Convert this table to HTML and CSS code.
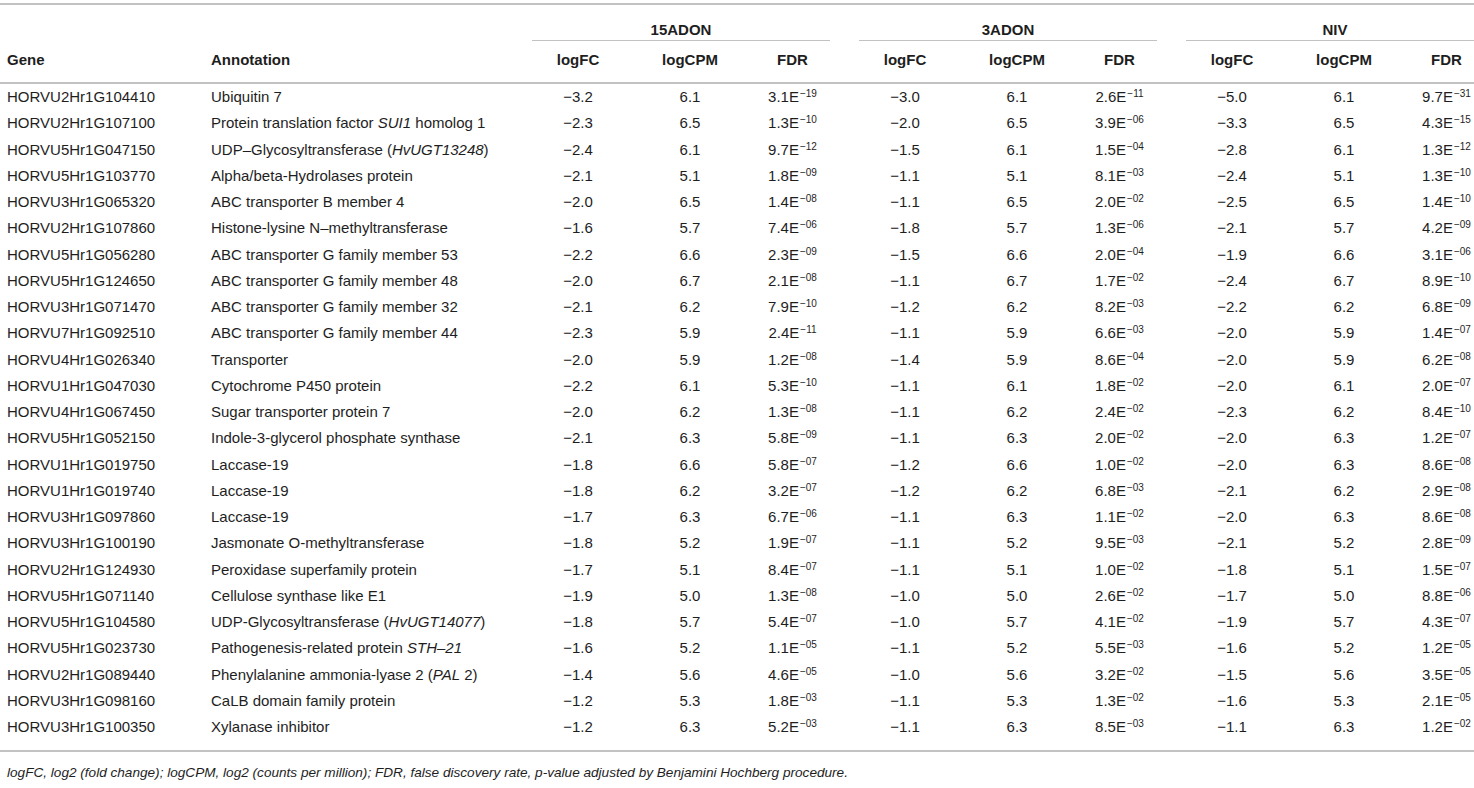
FILE: index.html
```html
<!DOCTYPE html>
<html lang="en">
<head>
<meta charset="utf-8">
<title>Differentially expressed genes</title>
<link rel="stylesheet" href="styles.css">
</head>
<body>
<div class="wrap">
<table class="data">
<colgroup>
<col class="c-gene"><col class="c-ann">
<col class="c1"><col class="c2"><col class="c3">
<col class="c1"><col class="c2"><col class="c3">
<col class="c1"><col class="c2"><col class="c3">
</colgroup>
<thead>
<tr class="grp">
<th rowspan="2" class="left gene-h">Gene</th>
<th rowspan="2" class="left ann-h">Annotation</th>
<th colspan="3"><div class="gline">15ADON</div></th>
<th colspan="3"><div class="gline">3ADON</div></th>
<th colspan="3"><div class="gline">NIV</div></th>
</tr>
<tr class="sub">
<th>logFC</th><th>logCPM</th><th>FDR</th>
<th>logFC</th><th>logCPM</th><th>FDR</th>
<th>logFC</th><th>logCPM</th><th>FDR</th>
</tr>
</thead>
<tbody>
<tr><td class="gene">HORVU2Hr1G104410</td><td class="ann">Ubiquitin 7</td><td>−3.2</td><td>6.1</td><td>3.1E<sup>−19</sup></td><td>−3.0</td><td>6.1</td><td>2.6E<sup>−11</sup></td><td>−5.0</td><td>6.1</td><td>9.7E<sup>−31</sup></td></tr>
<tr><td class="gene">HORVU2Hr1G107100</td><td class="ann">Protein translation factor <i>SUI1</i> homolog 1</td><td>−2.3</td><td>6.5</td><td>1.3E<sup>−10</sup></td><td>−2.0</td><td>6.5</td><td>3.9E<sup>−06</sup></td><td>−3.3</td><td>6.5</td><td>4.3E<sup>−15</sup></td></tr>
<tr><td class="gene">HORVU5Hr1G047150</td><td class="ann">UDP–Glycosyltransferase (<i>HvUGT13248</i>)</td><td>−2.4</td><td>6.1</td><td>9.7E<sup>−12</sup></td><td>−1.5</td><td>6.1</td><td>1.5E<sup>−04</sup></td><td>−2.8</td><td>6.1</td><td>1.3E<sup>−12</sup></td></tr>
<tr><td class="gene">HORVU5Hr1G103770</td><td class="ann">Alpha/beta-Hydrolases protein</td><td>−2.1</td><td>5.1</td><td>1.8E<sup>−09</sup></td><td>−1.1</td><td>5.1</td><td>8.1E<sup>−03</sup></td><td>−2.4</td><td>5.1</td><td>1.3E<sup>−10</sup></td></tr>
<tr><td class="gene">HORVU3Hr1G065320</td><td class="ann">ABC transporter B member 4</td><td>−2.0</td><td>6.5</td><td>1.4E<sup>−08</sup></td><td>−1.1</td><td>6.5</td><td>2.0E<sup>−02</sup></td><td>−2.5</td><td>6.5</td><td>1.4E<sup>−10</sup></td></tr>
<tr><td class="gene">HORVU2Hr1G107860</td><td class="ann">Histone-lysine N–methyltransferase</td><td>−1.6</td><td>5.7</td><td>7.4E<sup>−06</sup></td><td>−1.8</td><td>5.7</td><td>1.3E<sup>−06</sup></td><td>−2.1</td><td>5.7</td><td>4.2E<sup>−09</sup></td></tr>
<tr><td class="gene">HORVU5Hr1G056280</td><td class="ann">ABC transporter G family member 53</td><td>−2.2</td><td>6.6</td><td>2.3E<sup>−09</sup></td><td>−1.5</td><td>6.6</td><td>2.0E<sup>−04</sup></td><td>−1.9</td><td>6.6</td><td>3.1E<sup>−06</sup></td></tr>
<tr><td class="gene">HORVU5Hr1G124650</td><td class="ann">ABC transporter G family member 48</td><td>−2.0</td><td>6.7</td><td>2.1E<sup>−08</sup></td><td>−1.1</td><td>6.7</td><td>1.7E<sup>−02</sup></td><td>−2.4</td><td>6.7</td><td>8.9E<sup>−10</sup></td></tr>
<tr><td class="gene">HORVU3Hr1G071470</td><td class="ann">ABC transporter G family member 32</td><td>−2.1</td><td>6.2</td><td>7.9E<sup>−10</sup></td><td>−1.2</td><td>6.2</td><td>8.2E<sup>−03</sup></td><td>−2.2</td><td>6.2</td><td>6.8E<sup>−09</sup></td></tr>
<tr><td class="gene">HORVU7Hr1G092510</td><td class="ann">ABC transporter G family member 44</td><td>−2.3</td><td>5.9</td><td>2.4E<sup>−11</sup></td><td>−1.1</td><td>5.9</td><td>6.6E<sup>−03</sup></td><td>−2.0</td><td>5.9</td><td>1.4E<sup>−07</sup></td></tr>
<tr><td class="gene">HORVU4Hr1G026340</td><td class="ann">Transporter</td><td>−2.0</td><td>5.9</td><td>1.2E<sup>−08</sup></td><td>−1.4</td><td>5.9</td><td>8.6E<sup>−04</sup></td><td>−2.0</td><td>5.9</td><td>6.2E<sup>−08</sup></td></tr>
<tr><td class="gene">HORVU1Hr1G047030</td><td class="ann">Cytochrome P450 protein</td><td>−2.2</td><td>6.1</td><td>5.3E<sup>−10</sup></td><td>−1.1</td><td>6.1</td><td>1.8E<sup>−02</sup></td><td>−2.0</td><td>6.1</td><td>2.0E<sup>−07</sup></td></tr>
<tr><td class="gene">HORVU4Hr1G067450</td><td class="ann">Sugar transporter protein 7</td><td>−2.0</td><td>6.2</td><td>1.3E<sup>−08</sup></td><td>−1.1</td><td>6.2</td><td>2.4E<sup>−02</sup></td><td>−2.3</td><td>6.2</td><td>8.4E<sup>−10</sup></td></tr>
<tr><td class="gene">HORVU5Hr1G052150</td><td class="ann">Indole-3-glycerol phosphate synthase</td><td>−2.1</td><td>6.3</td><td>5.8E<sup>−09</sup></td><td>−1.1</td><td>6.3</td><td>2.0E<sup>−02</sup></td><td>−2.0</td><td>6.3</td><td>1.2E<sup>−07</sup></td></tr>
<tr><td class="gene">HORVU1Hr1G019750</td><td class="ann">Laccase-19</td><td>−1.8</td><td>6.6</td><td>5.8E<sup>−07</sup></td><td>−1.2</td><td>6.6</td><td>1.0E<sup>−02</sup></td><td>−2.0</td><td>6.3</td><td>8.6E<sup>−08</sup></td></tr>
<tr><td class="gene">HORVU1Hr1G019740</td><td class="ann">Laccase-19</td><td>−1.8</td><td>6.2</td><td>3.2E<sup>−07</sup></td><td>−1.2</td><td>6.2</td><td>6.8E<sup>−03</sup></td><td>−2.1</td><td>6.2</td><td>2.9E<sup>−08</sup></td></tr>
<tr><td class="gene">HORVU3Hr1G097860</td><td class="ann">Laccase-19</td><td>−1.7</td><td>6.3</td><td>6.7E<sup>−06</sup></td><td>−1.1</td><td>6.3</td><td>1.1E<sup>−02</sup></td><td>−2.0</td><td>6.3</td><td>8.6E<sup>−08</sup></td></tr>
<tr><td class="gene">HORVU3Hr1G100190</td><td class="ann">Jasmonate O-methyltransferase</td><td>−1.8</td><td>5.2</td><td>1.9E<sup>−07</sup></td><td>−1.1</td><td>5.2</td><td>9.5E<sup>−03</sup></td><td>−2.1</td><td>5.2</td><td>2.8E<sup>−09</sup></td></tr>
<tr><td class="gene">HORVU2Hr1G124930</td><td class="ann">Peroxidase superfamily protein</td><td>−1.7</td><td>5.1</td><td>8.4E<sup>−07</sup></td><td>−1.1</td><td>5.1</td><td>1.0E<sup>−02</sup></td><td>−1.8</td><td>5.1</td><td>1.5E<sup>−07</sup></td></tr>
<tr><td class="gene">HORVU5Hr1G071140</td><td class="ann">Cellulose synthase like E1</td><td>−1.9</td><td>5.0</td><td>1.3E<sup>−08</sup></td><td>−1.0</td><td>5.0</td><td>2.6E<sup>−02</sup></td><td>−1.7</td><td>5.0</td><td>8.8E<sup>−06</sup></td></tr>
<tr><td class="gene">HORVU5Hr1G104580</td><td class="ann">UDP-Glycosyltransferase (<i>HvUGT14077</i>)</td><td>−1.8</td><td>5.7</td><td>5.4E<sup>−07</sup></td><td>−1.0</td><td>5.7</td><td>4.1E<sup>−02</sup></td><td>−1.9</td><td>5.7</td><td>4.3E<sup>−07</sup></td></tr>
<tr><td class="gene">HORVU5Hr1G023730</td><td class="ann">Pathogenesis-related protein <i>STH–21</i></td><td>−1.6</td><td>5.2</td><td>1.1E<sup>−05</sup></td><td>−1.1</td><td>5.2</td><td>5.5E<sup>−03</sup></td><td>−1.6</td><td>5.2</td><td>1.2E<sup>−05</sup></td></tr>
<tr><td class="gene">HORVU2Hr1G089440</td><td class="ann">Phenylalanine ammonia-lyase 2 (<i>PAL</i> 2)</td><td>−1.4</td><td>5.6</td><td>4.6E<sup>−05</sup></td><td>−1.0</td><td>5.6</td><td>3.2E<sup>−02</sup></td><td>−1.5</td><td>5.6</td><td>3.5E<sup>−05</sup></td></tr>
<tr><td class="gene">HORVU3Hr1G098160</td><td class="ann">CaLB domain family protein</td><td>−1.2</td><td>5.3</td><td>1.8E<sup>−03</sup></td><td>−1.1</td><td>5.3</td><td>1.3E<sup>−02</sup></td><td>−1.6</td><td>5.3</td><td>2.1E<sup>−05</sup></td></tr>
<tr class="last"><td class="gene">HORVU3Hr1G100350</td><td class="ann">Xylanase inhibitor</td><td>−1.2</td><td>6.3</td><td>5.2E<sup>−03</sup></td><td>−1.1</td><td>6.3</td><td>8.5E<sup>−03</sup></td><td>−1.1</td><td>6.3</td><td>1.2E<sup>−02</sup></td></tr>
</tbody>
</table>
<p class="note">logFC, log2 (fold change); logCPM, log2 (counts per million); FDR, false discovery rate, p-value adjusted by Benjamini Hochberg procedure.</p>
</div>
</body>
</html>
```

FILE: styles.css
```css
html, body {
  margin: 0;
  padding: 0;
  background: #ffffff;
  overflow: hidden;
}

body {
  font-family: "Liberation Sans", Arial, sans-serif;
  color: #1e1e1e;
  font-size: 15px;
}

.wrap {
  width: 1498px;
  padding-top: 3px;
}

.data {
  width: 1498px;
  table-layout: fixed;
  border-collapse: collapse;
  border-top: 2px solid #c2c2c2;
}

.c-gene { width: 205px; }
.c-ann { width: 312px; }
.c1 { width: 122px; }
.c2 { width: 102px; }
.c3 { width: 103px; }

.data th {
  font-weight: bold;
  line-height: 18px;
  text-align: center;
  padding: 0;
}

.grp th {
  padding-top: 16px;
  vertical-align: bottom;
}

.gline {
  margin: 0 14px 0 15px;
  padding-bottom: 1px;
  border-bottom: 1px solid #c2c2c2;
}

.sub th {
  padding: 10px 0 13px;
  border-bottom: 2px solid #c2c2c2;
}

.data th.left {
  text-align: left;
  vertical-align: bottom;
  padding-bottom: 13px;
  border-bottom: 2px solid #c2c2c2;
}

.data th.gene-h { padding-left: 7px; }
.data th.ann-h { padding-left: 6px; }

.data td {
  line-height: 18.25px;
  padding: 4px 0;
  text-align: center;
  white-space: nowrap;
}

.data td.gene {
  text-align: left;
  padding-left: 7px;
}

.data td.ann {
  text-align: left;
  padding-left: 6px;
}

.data tr.last td {
  padding-bottom: 14px;
  border-bottom: 2px solid #c2c2c2;
}

.data sup {
  font-size: 10px;
  line-height: 0;
  vertical-align: 5px;
  margin-left: 1px;
}

.note {
  margin: 12px 0 0 7px;
  font-style: italic;
  font-size: 13.6px;
  line-height: 18px;
}
```
